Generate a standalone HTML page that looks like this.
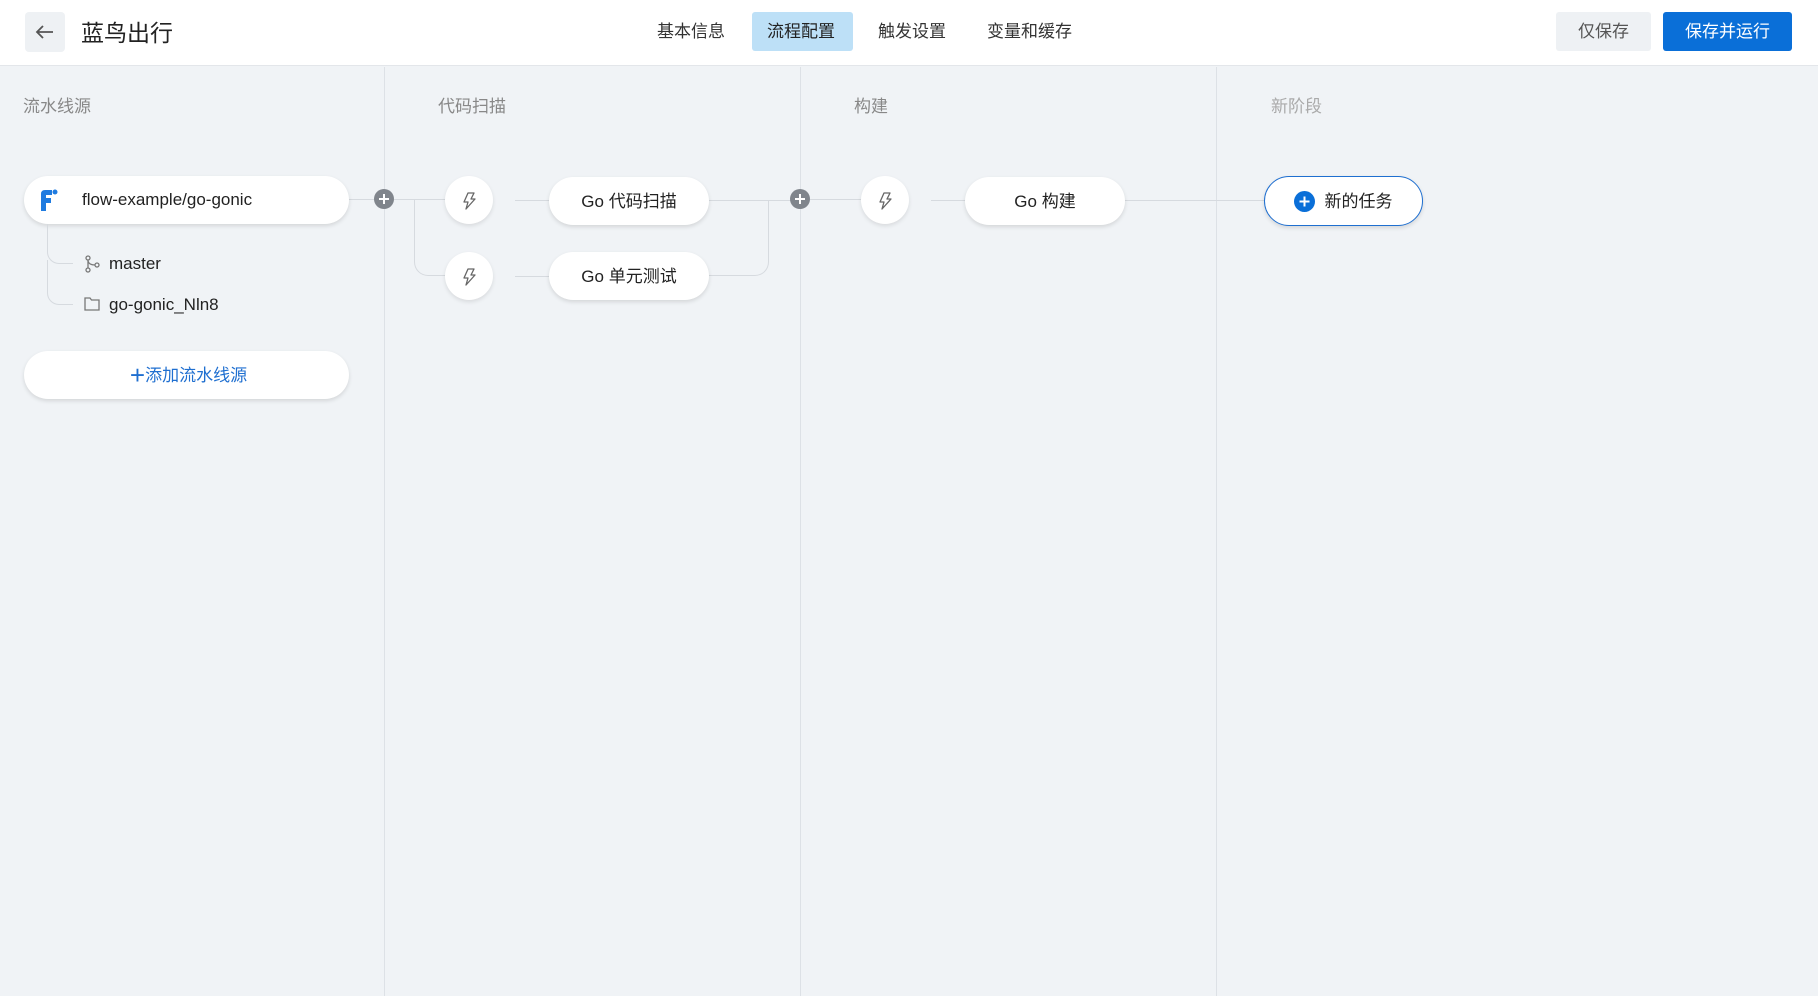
<!DOCTYPE html>
<html><head><meta charset="utf-8"><style>
*{box-sizing:border-box;margin:0;padding:0}
body{width:1818px;height:996px;background:#f0f3f6;font-family:"Liberation Sans","Noto Sans CJK SC",sans-serif;position:relative;overflow:hidden;color:#222}
.hdr{position:absolute;left:0;top:0;width:1818px;height:66px;background:#fff;border-bottom:1px solid #e3e6ea}
.abs{position:absolute}
.back{left:25px;top:12px;width:40px;height:40px;background:#eef1f4;border-radius:4px}
.tab{top:12px;height:39px;line-height:39px;font-size:17px;color:#333;padding:0 15px;border-radius:3px}
.btn{top:12px;height:39px;line-height:39px;font-size:17px;border-radius:3px;text-align:center}
.vline{top:67px;width:1px;height:929px;background:#dde1e6}
.st{top:92px;font-size:17px;color:#888}
.pill{background:#fff;border-radius:25px;box-shadow:0 2px 4px rgba(0,0,0,.12);font-size:17px;text-align:center}
.circ{width:48px;height:48px;border-radius:50%;background:#fff;box-shadow:0 2px 4px rgba(0,0,0,.1)}
.plus{width:20px;height:20px;border-radius:50%;background:#80858c}
.ln{background:#d6dadf}
</style></head><body>
<div class="hdr">
 <div class="abs back"><svg width="40" height="40" viewBox="0 0 40 40"><path d="M28 20H12M18 14l-6 6 6 6" stroke="#555" stroke-width="1.8" fill="none"/></svg></div>
 <div class="abs" style="left:81px;top:14px;font-size:23px;color:#222">蓝鸟出行</div>
 <div class="abs tab" style="left:642px">基本信息</div>
 <div class="abs tab" style="left:752px;width:101px;background:#bde0f7;color:#222">流程配置</div>
 <div class="abs tab" style="left:863px">触发设置</div>
 <div class="abs tab" style="left:972px">变量和缓存</div>
 <div class="abs btn" style="left:1556px;width:95px;background:#eef1f4;color:#555">仅保存</div>
 <div class="abs btn" style="left:1663px;width:129px;background:#0a6fd8;color:#fff">保存并运行</div>
</div>
<div class="abs vline" style="left:384px"></div>
<div class="abs vline" style="left:800px"></div>
<div class="abs vline" style="left:1216px"></div>
<div class="abs st" style="left:23px">流水线源</div>
<div class="abs st" style="left:438px">代码扫描</div>
<div class="abs st" style="left:854px">构建</div>
<div class="abs st" style="left:1271px;color:#aaa">新阶段</div>

<div class="abs ln" style="left:349px;top:199px;width:36px;height:1px"></div>
<div class="abs ln" style="left:394px;top:199px;width:75px;height:1px"></div>
<div class="abs" style="left:414px;top:199px;width:55px;height:77px;border-left:1px solid #d6dadf;border-bottom:1px solid #d6dadf;border-bottom-left-radius:14px"></div>
<div class="abs ln" style="left:515px;top:200px;width:35px;height:1px"></div>
<div class="abs ln" style="left:515px;top:276px;width:35px;height:1px"></div>
<div class="abs ln" style="left:706px;top:200px;width:100px;height:1px"></div>
<div class="abs" style="left:706px;top:200px;width:63px;height:76px;border-right:1px solid #d6dadf;border-bottom:1px solid #d6dadf;border-bottom-right-radius:14px"></div>
<div class="abs ln" style="left:810px;top:199px;width:80px;height:1px"></div>
<div class="abs ln" style="left:931px;top:200px;width:36px;height:1px"></div>
<div class="abs ln" style="left:1125px;top:200px;width:140px;height:1px"></div>

<div class="abs pill" style="left:24px;top:176px;width:325px;height:48px;text-align:left">
 <svg class="abs" style="left:15px;top:12px" width="20" height="24" viewBox="0 0 20 24"><path d="M2 6Q2 2 6 2H13V7H7V10H12V15H7V23H2Z" fill="#1f7be0"/><circle cx="16" cy="4" r="2.5" fill="#1f7be0"/></svg>
 <div class="abs" style="left:58px;top:14px;font-size:17px">flow-example/go-gonic</div>
</div>
<div class="abs" style="left:47px;top:224px;width:26px;height:40px;border-left:1px solid #d6dadf;border-bottom:1px solid #d6dadf;border-bottom-left-radius:12px"></div>
<div class="abs" style="left:47px;top:260px;width:26px;height:45px;border-left:1px solid #d6dadf;border-bottom:1px solid #d6dadf;border-bottom-left-radius:12px"></div>
<svg class="abs" style="left:84px;top:255px" width="16" height="18" viewBox="0 0 16 18"><circle cx="4" cy="3" r="2" stroke="#777" fill="none" stroke-width="1.3"/><circle cx="4" cy="15" r="2" stroke="#777" fill="none" stroke-width="1.3"/><circle cx="13" cy="10" r="2" stroke="#777" fill="none" stroke-width="1.3"/><path d="M4 5V13M4 6Q5 10 11 10" stroke="#777" fill="none" stroke-width="1.3"/></svg>
<div class="abs" style="left:109px;top:254px;font-size:17px">master</div>
<svg class="abs" style="left:84px;top:297px" width="16" height="14" viewBox="0 0 16 14"><path d="M1 1H6L7.5 3H15V13H1Z" stroke="#777" fill="none" stroke-width="1.3"/></svg>
<div class="abs" style="left:109px;top:295px;font-size:17px">go-gonic_Nln8</div>
<div class="abs pill" style="left:24px;top:351px;width:325px;height:48px;line-height:48px;color:#1f6fd0;padding-left:4px">
 <span style="font-size:26px;vertical-align:-3px">+</span>添加流水线源</div>

<div class="abs plus" style="left:374px;top:189px"><svg width="20" height="20"><path d="M10 5V15M5 10H15" stroke="#fff" stroke-width="2"/></svg></div>
<div class="abs plus" style="left:790px;top:189px"><svg width="20" height="20"><path d="M10 5V15M5 10H15" stroke="#fff" stroke-width="2"/></svg></div>

<div class="abs circ" style="left:445px;top:176px"></div>
<div class="abs circ" style="left:445px;top:252px"></div>
<div class="abs circ" style="left:861px;top:176px"></div>
<svg class="abs" style="left:461px;top:192px" width="16" height="18" viewBox="0 0 16 18"><path d="M7 1H13L10 7H14L5 17L7 10H3Z" stroke="#666" fill="none" stroke-width="1.3" stroke-linejoin="round"/></svg>
<svg class="abs" style="left:461px;top:268px" width="16" height="18" viewBox="0 0 16 18"><path d="M7 1H13L10 7H14L5 17L7 10H3Z" stroke="#666" fill="none" stroke-width="1.3" stroke-linejoin="round"/></svg>
<svg class="abs" style="left:877px;top:192px" width="16" height="18" viewBox="0 0 16 18"><path d="M7 1H13L10 7H14L5 17L7 10H3Z" stroke="#666" fill="none" stroke-width="1.3" stroke-linejoin="round"/></svg>

<div class="abs pill" style="left:549px;top:177px;width:160px;height:48px;line-height:49px">Go 代码扫描</div>
<div class="abs pill" style="left:549px;top:252px;width:160px;height:48px;line-height:49px">Go 单元测试</div>
<div class="abs pill" style="left:965px;top:177px;width:160px;height:48px;line-height:49px">Go 构建</div>
<div class="abs pill" style="left:1264px;top:176px;width:159px;height:50px;line-height:49px;border:1px solid #1f6fd0;padding-left:30px">
 <svg class="abs" style="left:29px;top:14px" width="21" height="21"><circle cx="10.5" cy="10.5" r="10.5" fill="#0a6fd8"/><path d="M10.5 5.5V15.5M5.5 10.5H15.5" stroke="#fff" stroke-width="2"/></svg>新的任务</div>
</body></html>
